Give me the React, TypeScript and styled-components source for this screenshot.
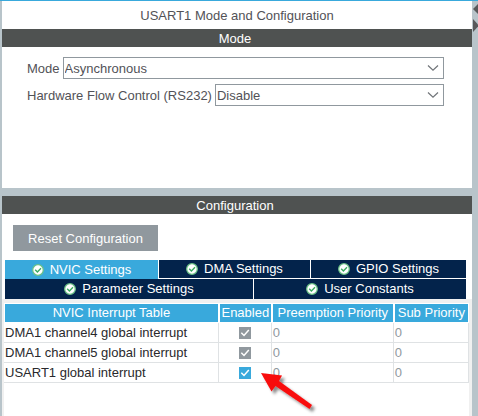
import React from 'react';
import styled, { createGlobalStyle } from 'styled-components';

const color = {
  gutter: '#b8c4ca',
  accent: '#39a9dc',
  navy: '#03234b',
  bar: '#4f5251',
  grey: '#90989e',
  text: '#525257',
  line: '#dfe2e4',
};

const GlobalStyle = createGlobalStyle`
  *, *::before, *::after { box-sizing: border-box; }
  body {
    margin: 0;
    background: ${color.gutter};
    font-family: "Liberation Sans", Arial, sans-serif;
    font-size: 13px;
    line-height: 18px;
    color: ${color.text};
  }
  button, select { font: inherit; }
`;

const Page = styled.div`
  display: flex;
  min-height: 100vh;
  border-top: 1px solid ${color.accent};
  padding-left: 2px;
  overflow: hidden;
`;

const Main = styled.main`
  flex: 1;
  min-width: 0;
  display: flex;
  flex-direction: column;
  gap: 8px;
`;

const SplitHandle = styled.div`
  width: 6px;
  flex: none;
  overflow: hidden;
  svg { display: block; }
`;

const Panel = styled.section<{ $grow?: boolean }>`
  display: flex;
  flex-direction: column;
  flex: ${(p) => (p.$grow ? '1' : 'none')};
  background: #fff;
`;

const Title = styled.h1`
  margin: 0;
  padding: 6px 0 4px;
  font-size: 13px;
  font-weight: 400;
  text-align: center;
`;

const SectionBar = styled.h2`
  margin: 0;
  padding: 2px 4px 0 0;
  background: ${color.bar};
  color: #fff;
  font-size: 13px;
  line-height: 16px;
  font-weight: 400;
  text-align: center;
`;

const Form = styled.div`
  display: flex;
  flex-direction: column;
  gap: 5px;
  padding: 10px 28px 82px 25px;
`;

const Field = styled.div`
  display: flex;
  align-items: center;
  gap: 3px;
  label {
    flex: none;
    padding-top: 2px;
  }
`;

const SelectBox = styled.div`
  flex: 1;
  display: grid;
  align-items: center;
  > * { grid-area: 1 / 1; }
  svg {
    justify-self: end;
    margin-right: 5px;
    pointer-events: none;
  }
`;

const Select = styled.select`
  appearance: none;
  width: 100%;
  height: 22px;
  padding: 2px 20px 0 1px;
  border: 1px solid ${color.grey};
  border-radius: 0;
  background: #fff;
  color: ${color.text};
`;

const ResetButton = styled.button`
  align-self: flex-start;
  width: 145px;
  height: 26px;
  margin: 11px 0 9px 11px;
  padding: 2px 0 0;
  border: 0;
  background: ${color.grey};
  color: #fff;
`;

const Tabs = styled.div`
  display: flex;
  flex-direction: column;
  margin: 0 6px 0 3px;
`;

const Tab = styled.button<{ $active?: boolean }>`
  display: flex;
  align-items: center;
  justify-content: center;
  gap: 6px;
  height: 19px;
  padding: 0;
  border: 0;
  border-bottom: ${(p) => (p.$active ? '0' : '1px solid #fff')};
  background: ${(p) => (p.$active ? color.accent : color.navy)};
  color: #fff;
`;

const TabRow = styled.div<{ $columns: string }>`
  display: grid;
  grid-template-columns: ${(p) => p.$columns};
  column-gap: 1px;
  &:last-child ${Tab} {
    height: 20px;
    border-bottom: 0;
  }
`;

const TableFrame = styled.div`
  flex: 1;
  display: flex;
  padding: 4px 3px 0 2px;
  background: #f0f0f0;
`;

const TableArea = styled.div`
  position: relative;
  flex: 1;
  padding: 1px 0 33px;
  background: #fff;
`;

const Table = styled.table`
  width: 100%;
  table-layout: fixed;
  border-collapse: separate;
  border-spacing: 0;
`;

const HeadCell = styled.th`
  height: 19px;
  padding: 0;
  border-left: 1px solid #fff;
  border-right: 1px solid #fff;
  border-bottom: 1px solid #fff;
  background: ${color.accent};
  color: #fff;
  font-weight: 400;
  white-space: nowrap;
`;

const Cell = styled.td<{ $muted?: boolean }>`
  height: 20px;
  padding: 0 0 0 1px;
  border-right: 1px solid ${color.line};
  border-bottom: 1px solid ${color.line};
  color: ${(p) => (p.$muted ? color.grey : '#29292c')};
  white-space: nowrap;
`;

const CheckWrap = styled.span`
  display: grid;
  justify-content: center;
  align-items: center;
  > * { grid-area: 1 / 1; }
  svg { pointer-events: none; }
`;

const CheckInput = styled.input`
  appearance: none;
  width: 12px;
  height: 12px;
  margin: 0;
  background: ${color.accent};
  &:disabled { background: ${color.grey}; }
`;

const Pointer = styled.svg`
  position: absolute;
  left: 254px;
  top: 66px;
  pointer-events: none;
`;

const Chevron = () => (
  <svg width="12" height="8" viewBox="0 0 12 8" fill="none" stroke="#707479" strokeWidth="1.2" aria-hidden="true">
    <path d="M1 1.5 6 6.2 11 1.5" />
  </svg>
);

const StatusOk = () => (
  <svg width="12" height="12" viewBox="0 0 12 12" fill="none" aria-hidden="true">
    <circle cx="6" cy="6" r="5.3" fill="#fff" stroke="#6cc287" strokeWidth="1.3" />
    <path d="M3.2 5.8 5.4 8 9 4.3" stroke="#3bab60" strokeWidth="1.4" />
  </svg>
);

const Tick = () => (
  <svg width="12" height="12" viewBox="0 0 12 12" fill="none" stroke="#fff" strokeWidth="1.5" aria-hidden="true">
    <path d="M2.3 5.8 5 8.5 9.8 3" />
  </svg>
);

const tabRows = [
  { columns: '153fr 151fr 155fr', tabs: ['NVIC Settings', 'DMA Settings', 'GPIO Settings'] },
  { columns: '248fr 212fr', tabs: ['Parameter Settings', 'User Constants'] },
];

const interrupts = [
  { name: 'DMA1 channel4 global interrupt', locked: true },
  { name: 'DMA1 channel5 global interrupt', locked: true },
  { name: 'USART1 global interrupt', locked: false },
];

type ChoiceProps = { id: string; label: string; options: string[] };

const Choice = ({ id, label, options }: ChoiceProps) => (
  <Field>
    <label htmlFor={id}>{label}</label>
    <SelectBox>
      <Select id={id}>
        {options.map((o) => (
          <option key={o}>{o}</option>
        ))}
      </Select>
      <Chevron />
    </SelectBox>
  </Field>
);

export default function App() {
  const [active, setActive] = React.useState('NVIC Settings');
  return (
    <>
      <GlobalStyle />
      <Page>
        <Main>
          <Panel>
            <Title>USART1 Mode and Configuration</Title>
            <SectionBar>Mode</SectionBar>
            <Form>
              <Choice id="mode" label="Mode" options={['Asynchronous']} />
              <Choice id="flow" label="Hardware Flow Control (RS232)" options={['Disable']} />
            </Form>
          </Panel>
          <Panel $grow>
            <SectionBar>Configuration</SectionBar>
            <ResetButton type="button">Reset Configuration</ResetButton>
            <Tabs role="tablist">
              {tabRows.map((row) => (
                <TabRow key={row.columns} $columns={row.columns} role="presentation">
                  {row.tabs.map((name) => (
                    <Tab
                      key={name}
                      type="button"
                      role="tab"
                      aria-selected={name === active}
                      $active={name === active}
                      onClick={() => setActive(name)}
                    >
                      <StatusOk />
                      {name}
                    </Tab>
                  ))}
                </TabRow>
              ))}
            </Tabs>
            <TableFrame>
              <TableArea>
                <Table>
                  <colgroup>
                    <col width="46.2%" />
                    <col width="11.4%" />
                    <col width="26.2%" />
                    <col width="16.2%" />
                  </colgroup>
                  <thead>
                    <tr>
                      <HeadCell scope="col">NVIC Interrupt Table</HeadCell>
                      <HeadCell scope="col">Enabled</HeadCell>
                      <HeadCell scope="col">Preemption Priority</HeadCell>
                      <HeadCell scope="col">Sub Priority</HeadCell>
                    </tr>
                  </thead>
                  <tbody>
                    {interrupts.map((row) => (
                      <tr key={row.name}>
                        <Cell>{row.name}</Cell>
                        <Cell>
                          <CheckWrap>
                            <CheckInput
                              type="checkbox"
                              defaultChecked
                              disabled={row.locked}
                              aria-label={`Enable ${row.name}`}
                            />
                            <Tick />
                          </CheckWrap>
                        </Cell>
                        <Cell $muted>0</Cell>
                        <Cell $muted>0</Cell>
                      </tr>
                    ))}
                  </tbody>
                </Table>
                <Pointer width="62" height="48" viewBox="0 0 62 48" aria-hidden="true">
                  <defs>
                    <filter id="shadow" x="-20%" y="-20%" width="150%" height="150%">
                      <feDropShadow dx="3" dy="3" stdDeviation="1.5" floodColor="#000" floodOpacity="0.45" />
                    </filter>
                  </defs>
                  <path
                    d="M3 4 24 6.5 21 12 54 36 51.5 40 17.5 17 13.5 22.5Z"
                    fill="#f80d0d"
                    filter="url(#shadow)"
                  />
                </Pointer>
              </TableArea>
            </TableFrame>
          </Panel>
        </Main>
        <SplitHandle>
          <svg width="6" height="32" viewBox="0 0 6 32" fill="#58595b" aria-hidden="true">
            <path d="M6 3v10L1 8Z" />
            <path d="M1 18v13L7 24.5Z" />
          </svg>
        </SplitHandle>
      </Page>
    </>
  );
}
